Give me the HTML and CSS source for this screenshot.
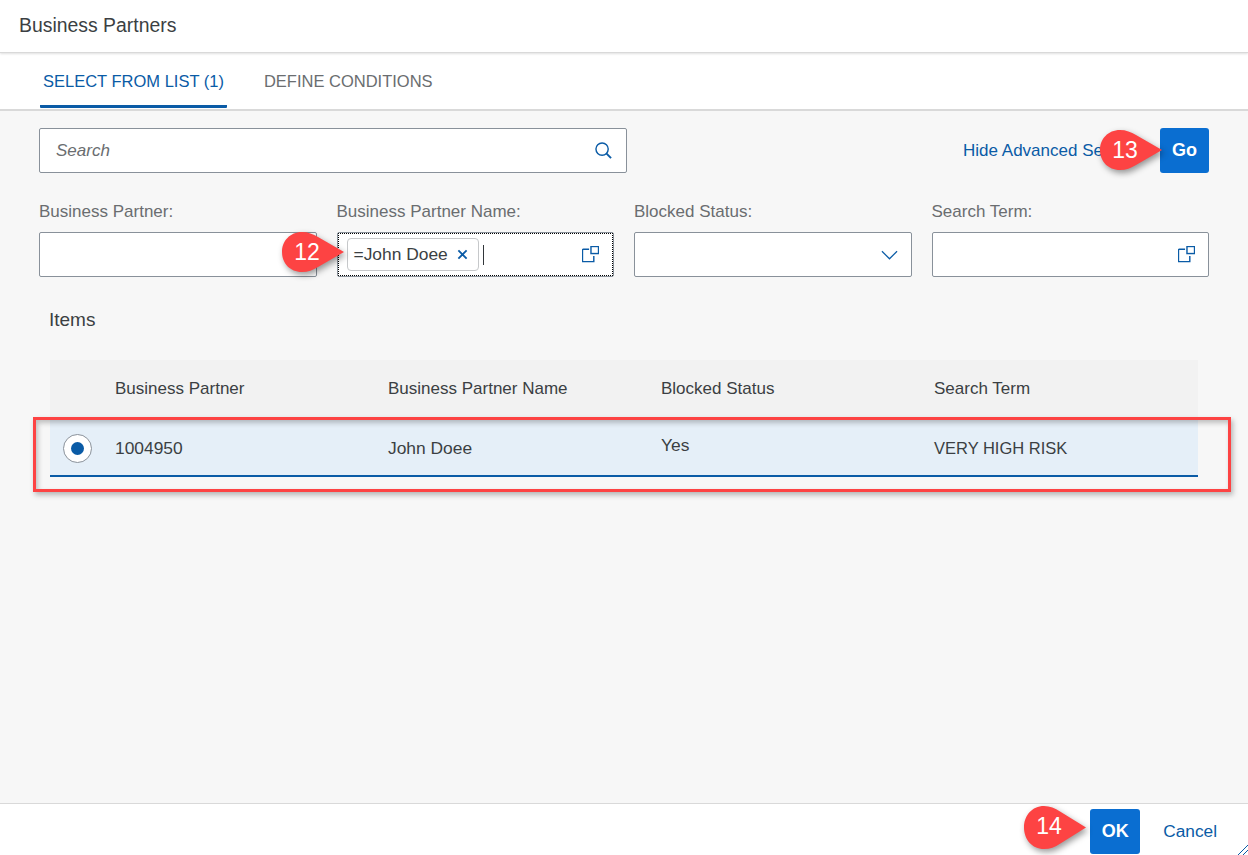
FILE: index.html
```html
<!DOCTYPE html>
<html>
  <head>
    <meta charset="utf-8">
    <title>Business Partners</title>
    <link rel="stylesheet" href="styles.css">
  </head>
  <body>
    <div class="dialog">
      <header class="title-bar">Business Partners</header>
      <nav class="tabs">
        <a class="tab tab-active">SELECT FROM LIST (1)</a>
        <a class="tab">DEFINE CONDITIONS</a>
      </nav>
      <main class="content">
        <div class="search-row">
          <div class="field search-field">
            <span class="placeholder">Search</span>
            <svg class="icon" viewBox="0 0 18 18"><circle cx="7.5" cy="7.5" r="6.5"/><path d="M12 12l5 5" stroke-width="2"/></svg>
          </div>
          <a class="link adv-link">Hide Advanced Search</a>
          <button class="btn">Go</button>
        </div>
        <div class="filters">
          <div class="filter">
            <label>Business Partner:</label>
            <div class="field"></div>
          </div>
          <div class="filter">
            <label>Business Partner Name:</label>
            <div class="field field-focus">
              <span class="token">=John Doee
                <svg class="token-x" viewBox="0 0 12 12"><path d="M1.5 1.5l9 9M10.5 1.5l-9 9"/></svg>
              </span>
              <span class="caret"></span>
              <svg class="icon help-icon" viewBox="0 0 18 18"><path d="M7.5 3.5H1.5a1 1 0 0 0-1 1v12h12V10.5"/><rect x="9.5" y=".5" width="8" height="7.5"/></svg>
            </div>
          </div>
          <div class="filter">
            <label>Blocked Status:</label>
            <div class="field">
              <svg class="icon chevron" viewBox="0 0 18 10"><path d="M1 1l8 8 8-8"/></svg>
            </div>
          </div>
          <div class="filter">
            <label>Search Term:</label>
            <div class="field">
              <svg class="icon help-icon" viewBox="0 0 18 18"><path d="M7.5 3.5H1.5a1 1 0 0 0-1 1v12h12V10.5"/><rect x="9.5" y=".5" width="8" height="7.5"/></svg>
            </div>
          </div>
        </div>
        <h2 class="items-title">Items</h2>
        <div class="table">
          <div class="tr th">
            <div></div>
            <div>Business Partner</div>
            <div>Business Partner Name</div>
            <div>Blocked Status</div>
            <div>Search Term</div>
          </div>
          <div class="tr row-selected">
            <div class="radio-cell"><span class="radio"></span></div>
            <div>1004950</div>
            <div>John Doee</div>
            <div class="cell-up">Yes</div>
            <div class="cell-term">VERY HIGH RISK</div>
          </div>
        </div>
      </main>
      <footer class="footer">
        <button class="btn btn-ok">OK</button>
        <a class="link cancel">Cancel</a>
      </footer>
    </div>

    <!-- screenshot annotations -->
    <div class="red-box"></div>
    <div class="callout callout-12">
      <svg viewBox="0 0 62 40"><path d="M62 20L36 5C31 2 26 0 20 0C8 0 0 9 0 20C0 31 8 40 20 40C26 40 31 38 36 35Z"/></svg>
      <span>12</span>
    </div>
    <div class="callout callout-13">
      <svg viewBox="0 0 62 40"><path d="M62 20L36 5C31 2 26 0 20 0C8 0 0 9 0 20C0 31 8 40 20 40C26 40 31 38 36 35Z"/></svg>
      <span>13</span>
    </div>
    <div class="callout callout-14">
      <svg viewBox="0 0 62 40" preserveAspectRatio="none"><path d="M62 20L36 5C31 2 26 0 20 0C8 0 0 9 0 20C0 31 8 40 20 40C26 40 31 38 36 35Z"/></svg>
      <span>14</span>
    </div>
    <svg class="resize-grip" viewBox="0 0 10 10"><path d="M10 0L0 10M10 5L5 10"/></svg>
  </body>
</html>
```

FILE: styles.css
```css
* {
  box-sizing: border-box;
}
html, body {
  height: 100%;
}
body {
  margin: 0;
  overflow: hidden;
  font-family: "Liberation Sans", Arial, sans-serif;
  font-size: 17px;
  color: #3b3f43;
  background: #fff;
}
.dialog {
  display: flex;
  flex-direction: column;
  height: 855px;
}
.title-bar {
  height: 53px;
  padding: 14px 19px 0;
  font-size: 19.4px;
  line-height: 22px;
  background: #fff;
  border-bottom: 1px solid #d9d9d9;
  box-shadow: 0 1px 2px rgba(0,0,0,.12);
  position: relative;
}
.tabs {
  display: flex;
  gap: 34px;
  height: 58px;
  padding-left: 40px;
  background: #fff;
  border-bottom: 2px solid #d9d9d9;
}
.tab {
  height: 55px;
  padding: 18px 3px 0;
  font-size: 16.5px;
  line-height: 20px;
  color: #6a6d70;
}
.tab-active {
  color: #0a5ba6;
  border-bottom: 3px solid #0a5ba6;
  border-radius: 0 0 1px 1px;
}
.content {
  flex: 1;
  padding: 17px 39px 0;
  background: #f7f7f7;
}
.search-row {
  display: flex;
  align-items: center;
}
.field {
  display: flex;
  align-items: center;
  justify-content: flex-end;
  height: 45px;
  padding-right: 13px;
  background: #fff;
  border: 1px solid #89919a;
  border-radius: 2px;
}
.search-field {
  width: 588px;
  justify-content: space-between;
  padding-left: 16px;
  padding-right: 14px;
}
.placeholder {
  font-style: italic;
  color: #6a6d70;
}
.icon {
  display: block;
  width: 17px;
  height: 17px;
  fill: none;
  stroke: #0a5ba6;
  stroke-width: 1.5;
}
.link {
  color: #0a5ba6;
}
.adv-link {
  margin-left: auto;
  margin-right: 24px;
  white-space: nowrap;
}
.btn {
  width: 49px;
  height: 45px;
  padding: 0;
  font-family: inherit;
  font-size: 18px;
  font-weight: bold;
  color: #fff;
  background: #0a6ed1;
  border: none;
  border-radius: 3px;
}
.filters {
  display: grid;
  grid-template-columns: repeat(4, 1fr);
  column-gap: 20px;
  margin-top: 27px;
}
.filter label {
  display: block;
  height: 32px;
  line-height: 24px;
  color: #6a6d70;
}
.field-focus {
  position: relative;
  justify-content: flex-start;
  padding-left: 9px;
  padding-right: 14px;
  outline: 1px dotted #000;
  outline-offset: -2px;
}
.token {
  display: flex;
  align-items: center;
  gap: 9px;
  height: 33px;
  padding: 0 10px 0 6px;
  font-size: 17.4px;
  white-space: nowrap;
  background: #fff;
  border: 1px solid #c6c8ca;
  border-radius: 4px;
}
.token-x {
  width: 11px;
  height: 11px;
  fill: none;
  stroke: #0a5ba6;
  stroke-width: 2;
}
.caret {
  width: 1px;
  height: 20px;
  margin-left: 4px;
  background: #32363a;
}
.help-icon {
  margin-left: auto;
}
.chevron {
  height: 10px;
  stroke-width: 1.3;
}
.items-title {
  margin: 32px 0 0 10px;
  font-size: 19px;
  font-weight: normal;
  line-height: 22px;
}
.table {
  margin: 29px 11px 0;
}
.tr {
  display: grid;
  grid-template-columns: 65px repeat(3, 273px) 1fr;
  align-items: center;
}
.th {
  height: 57px;
  background: #f2f2f2;
}
.row-selected {
  height: 60px;
  padding-top: 5px;
  font-size: 17.4px;
  background: #e5eff8;
  border-bottom: 2px solid #0a5ba6;
}
.radio-cell {
  display: flex;
  padding-left: 13px;
}
.radio {
  display: flex;
  align-items: center;
  justify-content: center;
  width: 29px;
  height: 29px;
  background: #fff;
  border: 1px solid #89919a;
  border-radius: 50%;
}
.radio::after {
  content: "";
  width: 13px;
  height: 13px;
  background: #0a5ba6;
  border-radius: 50%;
}
.cell-up {
  margin-top: -6px;
}
.cell-term {
  font-size: 16.5px;
}
.footer {
  display: flex;
  align-items: flex-start;
  height: 52px;
  padding: 5px 31px 0 0;
  justify-content: flex-end;
  gap: 23px;
  background: #fff;
  border-top: 1px solid #d9d9d9;
}
.btn-ok {
  width: 50px;
}
.cancel {
  margin-top: 12px;
  font-size: 17.3px;
}
.red-box {
  position: absolute;
  left: 33px;
  top: 417px;
  width: 1198px;
  height: 75px;
  border: 3px solid #fd4343;
  box-shadow: 2px 3px 5px rgba(60,60,60,.35), inset 2px 3px 5px rgba(60,60,60,.3);
}
.callout {
  position: absolute;
  width: 62px;
  height: 40px;
}
.callout svg {
  display: block;
  width: 100%;
  height: 100%;
  overflow: visible;
  fill: #fd4343;
  filter: drop-shadow(2px 3px 3px rgba(0,0,0,.4));
}
.callout span {
  position: absolute;
  left: 0;
  top: 0;
  width: 50px;
  font-size: 23px;
  line-height: 40px;
  text-align: center;
  color: #fff;
}
.callout-12 {
  left: 282px;
  top: 232px;
}
.callout-13 {
  left: 1100px;
  top: 130px;
}
.callout-14 {
  left: 1024px;
  top: 806px;
  height: 43px;
}
.resize-grip {
  position: absolute;
  right: 0;
  bottom: 0;
  width: 10px;
  height: 10px;
  fill: none;
  stroke: #0a5ba6;
  stroke-width: 1;
}
```
